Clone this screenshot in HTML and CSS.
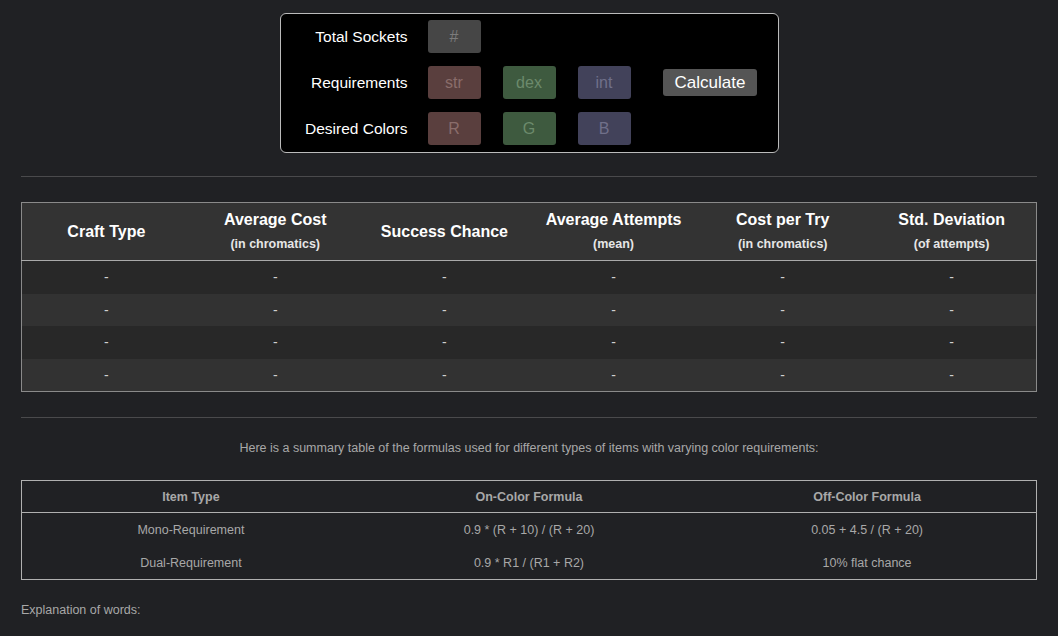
FILE: index.html
```html
<!DOCTYPE html>
<html>
<head>
<meta charset="utf-8">
<link rel="stylesheet" href="styles.css">
</head>
<body>
<div class="calc">
  <div class="row">
    <label class="lbl">Total Sockets</label>
    <input class="inp gray" placeholder="#">
  </div>
  <div class="row">
    <label class="lbl">Requirements</label>
    <input class="inp red" placeholder="str">
    <input class="inp green" placeholder="dex">
    <input class="inp blue" placeholder="int">
    <button class="btn">Calculate</button>
  </div>
  <div class="row">
    <label class="lbl">Desired Colors</label>
    <input class="inp red" placeholder="R">
    <input class="inp green" placeholder="G">
    <input class="inp blue" placeholder="B">
  </div>
</div>
<hr class="sep sep1">
<table class="results">
  <thead>
    <tr>
      <th>Craft Type</th>
      <th>Average Cost<span class="sub">(in chromatics)</span></th>
      <th>Success Chance</th>
      <th>Average Attempts<span class="sub">(mean)</span></th>
      <th>Cost per Try<span class="sub">(in chromatics)</span></th>
      <th>Std. Deviation<span class="sub">(of attempts)</span></th>
    </tr>
  </thead>
  <tbody>
    <tr><td>-</td><td>-</td><td>-</td><td>-</td><td>-</td><td>-</td></tr>
    <tr><td>-</td><td>-</td><td>-</td><td>-</td><td>-</td><td>-</td></tr>
    <tr><td>-</td><td>-</td><td>-</td><td>-</td><td>-</td><td>-</td></tr>
    <tr><td>-</td><td>-</td><td>-</td><td>-</td><td>-</td><td>-</td></tr>
  </tbody>
</table>
<hr class="sep sep2">
<p class="summary">Here is a summary table of the formulas used for different types of items with varying color requirements:</p>
<table class="formulas">
  <thead>
    <tr><th>Item Type</th><th>On-Color Formula</th><th>Off-Color Formula</th></tr>
  </thead>
  <tbody>
    <tr><td>Mono-Requirement</td><td>0.9 * (R + 10) / (R + 20)</td><td>0.05 + 4.5 / (R + 20)</td></tr>
    <tr><td>Dual-Requirement</td><td>0.9 * R1 / (R1 + R2)</td><td>10% flat chance</td></tr>
  </tbody>
</table>
<p class="explain">Explanation of words:</p>
</body>
</html>
```
FILE: styles.css
```css
html, body {
  margin: 0;
  padding: 0;
  background: #202124;
  font-family: "Liberation Sans", Arial, sans-serif;
  color: #ddd;
}
body {
  padding: 13px 21px 0 21px;
  overflow: hidden;
}
.calc {
  width: 497px;
  margin: 0 auto;
  background: #000;
  border: 1px solid #bbb;
  border-radius: 6px;
  padding: 6px 0 7px 0;
  display: flex;
  flex-direction: column;
  gap: 13px;
}
.row {
  display: flex;
  align-items: center;
  height: 33px;
  padding-left: 20px;
}
.lbl {
  width: 107px;
  text-align: right;
  font-size: 15.5px;
  color: #fff;
  margin-right: 20px;
}
.inp {
  width: 53px;
  height: 33px;
  box-sizing: border-box;
  border: none;
  border-radius: 3px;
  margin: 0 22px 0 0;
  padding: 0;
  text-align: center;
  font-family: "Liberation Sans", Arial, sans-serif;
  font-size: 16px;
  color: #ddd;
  outline: none;
}
.inp::placeholder { color: #7a7a7a; }
.gray { background: #464646; }
.gray::placeholder { color: #7c7c7c; }
.red { background: #5a3f3e; }
.red::placeholder { color: #8a6d6b; }
.green { background: #3e5a3f; }
.green::placeholder { color: #6c8a6c; }
.blue { background: #42425a; }
.blue::placeholder { color: #70708a; }
.btn {
  margin-left: 10px;
  height: 27px;
  padding: 0 12px;
  background: #555;
  color: #fff;
  border: none;
  border-radius: 3px;
  font-family: "Liberation Sans", Arial, sans-serif;
  font-size: 17px;
}
.sep {
  border: none;
  border-top: 1px solid #4a4a4c;
  margin: 0;
  height: 0;
}
.sep1 { margin-top: 23px; margin-bottom: 25px; }
.sep2 { margin-top: 25px; margin-bottom: 0; }
table {
  width: 100%;
  border-collapse: collapse;
  table-layout: fixed;
}
.results {
  border: 1px solid #8a8a8a;
}
.results th {
  background: #333;
  color: #fff;
  font-size: 16px;
  font-weight: bold;
  height: 57px;
  padding: 0;
  border-bottom: 1px solid #aaa;
  line-height: 22px;
}
.results .sub {
  display: block;
  font-size: 12.5px;
  color: #e6e6e6;
  line-height: 20px;
  margin-top: 3px;
}
.results td {
  text-align: center;
  height: 32.5px;
  padding: 0;
  font-size: 14px;
  color: #d0d0d0;
}
.results tbody tr:nth-child(odd) td { background: #282828; }
.results tbody tr:nth-child(even) td { background: #323232; }
.summary {
  margin: 23px 0 25px 0;
  text-align: center;
  font-size: 12.5px;
  color: #a8a8a8;
}
.formulas {
  border: 1px solid #b0b0b0;
}
.formulas th {
  font-size: 12.5px;
  font-weight: bold;
  color: #a8a8a8;
  height: 31px;
  padding: 0;
  border-bottom: 1px solid #b0b0b0;
}
.formulas td {
  text-align: center;
  font-size: 12.5px;
  color: #a8a8a8;
  height: 33px;
  padding: 0;
}
.explain {
  margin: 23px 0 0 0;
  font-size: 12.5px;
  color: #a8a8a8;
}
```
